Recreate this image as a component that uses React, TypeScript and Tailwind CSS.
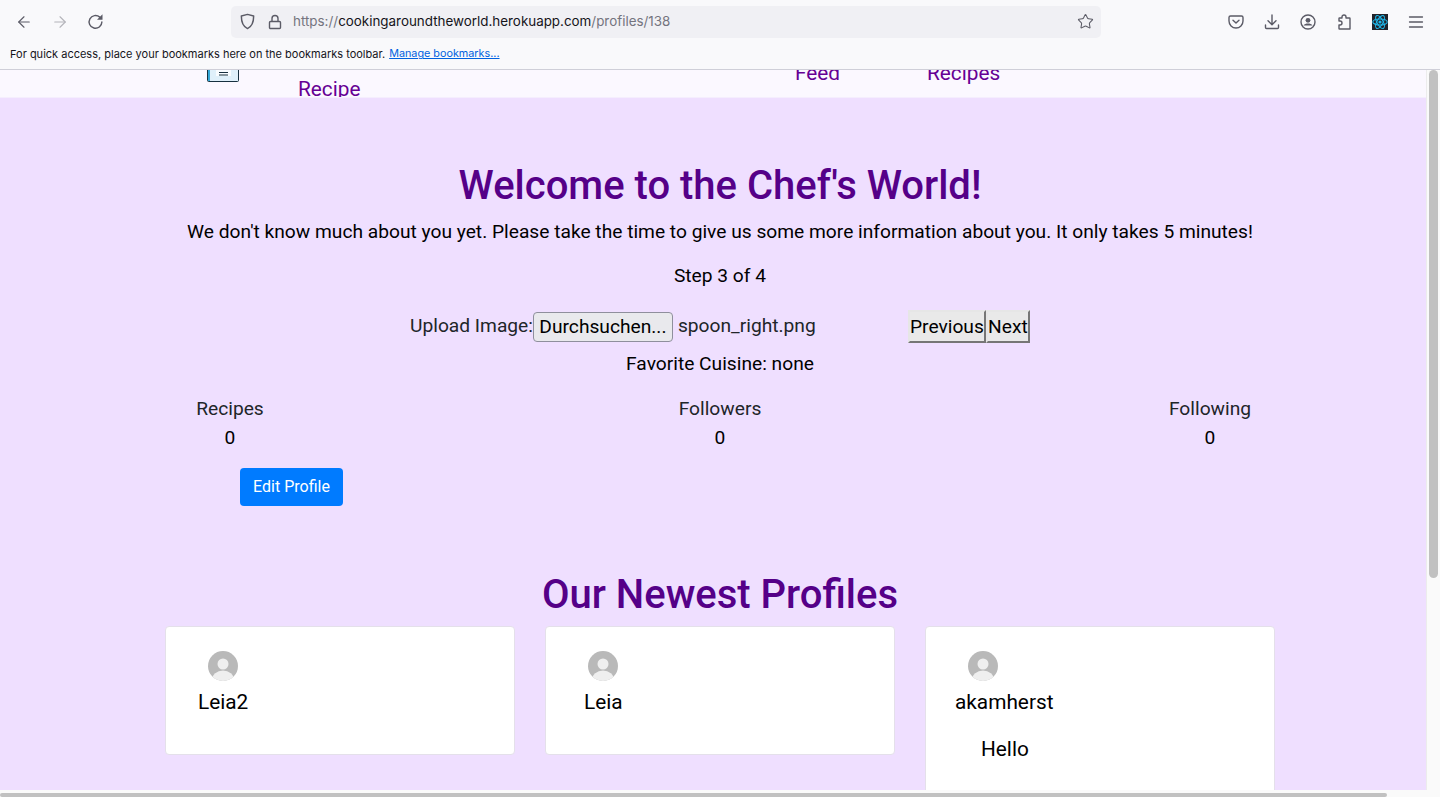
import React from 'react';
import { ArrowLeft, ArrowRight, Star } from 'lucide-react';

const Avatar = () => (
  <svg width="30" height="30" viewBox="0 0 30 30" className="block">
    <defs>
      <clipPath id="avatar-clip"><circle cx="15" cy="15" r="15" /></clipPath>
    </defs>
    <g clipPath="url(#avatar-clip)">
      <rect width="30" height="30" fill="#b9b9b9" />
      <circle cx="15" cy="13" r="5.5" fill="#efefef" />
      <ellipse cx="15" cy="29" rx="11" ry="9.5" fill="#efefef" />
    </g>
  </svg>
);

const ReactLogo = () => (
  <svg width="16" height="16" viewBox="0 0 16 16" className="block bg-[#20232a]">
    <circle cx="8" cy="8" r="1.6" fill="#1fb6e8" />
    <g fill="none" stroke="#1fb6e8" strokeWidth="1.1">
      <ellipse cx="8" cy="8" rx="7.2" ry="3" />
      <ellipse cx="8" cy="8" rx="7.2" ry="3" transform="rotate(60 8 8)" />
      <ellipse cx="8" cy="8" rx="7.2" ry="3" transform="rotate(120 8 8)" />
    </g>
  </svg>
);

// toolbar icons, all on the same 16px grid
const ToolIcon = ({ d, size = 16, width = 1.4 }: { d: string; size?: number; width?: number }) => (
  <svg width={size} height={size} viewBox="0 0 16 16" fill="none" stroke="currentColor" strokeWidth={width} strokeLinecap="round" strokeLinejoin="round" className="block shrink-0">
    <path d={d} />
  </svg>
);

const ReloadIcon = () => (
  <svg width="17" height="17" viewBox="0 0 16 16" fill="none" className="block">
    <path d="M14 8.5a6 6 0 1 1-2-4.6" stroke="currentColor" strokeWidth="1.35" strokeLinecap="round" />
    <path d="M14.6 1.2v5.2H9.4z" fill="currentColor" />
  </svg>
);

const AccountIcon = () => (
  <svg width="16" height="16" viewBox="0 0 16 16" fill="none" className="block">
    <circle cx="8" cy="8" r="7" stroke="currentColor" strokeWidth="1.4" />
    <circle cx="8" cy="6.3" r="2.4" fill="currentColor" />
    <path d="M3.6 11.2c.8-1.2 2.5-1.7 4.4-1.7s3.6.5 4.4 1.7v.4H3.6z" fill="currentColor" />
  </svg>
);

const BookIcon = () => (
  <svg width="32" height="13" viewBox="0 0 32 13" className="block">
    <rect x="0.5" y="-8" width="31" height="20.5" rx="1" fill="#dff0fa" stroke="#17303f" />
    <rect x="1" y="-8" width="2" height="20" fill="#35a7d6" />
    <rect x="9" y="-8" width="15" height="15" fill="#f8fcff" />
    <path d="M12 3.5h9M12 6h9" stroke="#17303f" strokeWidth="1" />
  </svg>
);

const profiles = [
  { name: 'Leia2', nameClass: 'pl-[32px]', bio: '', cardClass: 'h-[129px]' },
  { name: 'Leia', nameClass: 'pl-[38px]', bio: '', cardClass: 'h-[129px]' },
  { name: 'akamherst', nameClass: 'pl-[29px]', bio: 'Hello', cardClass: 'h-[190px]' },
];

const stats = [
  { label: 'Recipes', value: 0 },
  { label: 'Followers', value: 0 },
  { label: 'Following', value: 0 },
];

const App: React.FC = () => {
  return (
    <div className="flex h-[797px] w-[1440px] flex-col overflow-hidden bg-[#f9f9fb] font-['Roboto',sans-serif]">
      {/* Browser toolbar */}
      <div className="h-[70px] shrink-0 border-b border-[#cfcfd8] bg-[#f9f9fb]">
        <div className="flex h-[42px] items-center pt-[1px]">
          <div className="flex w-[231px] items-center pl-[15px] text-[#5b5b66]">
            <ArrowLeft size={18} strokeWidth={1.5} />
            <ArrowRight size={18} strokeWidth={1.5} className="ml-[18px] text-[#b4b4ba]" />
            <div className="ml-[18px]"><ReloadIcon /></div>
          </div>
          <div className="flex h-[32px] w-[870px] items-center rounded-[5px] bg-[#f0f0f4] pl-[8px] pr-[7px] text-[#5b5b66]">
            <ToolIcon size={17} d="M8 1.3l5.8 1.6c0 5.5-1 9.7-5.8 11.8C3.2 12.600 2.200 8.400 2.200 2.900z" />
            <div className="ml-[11px]">
              <ToolIcon size={16} d="M3.500 7.500h9a1 1 0 0 1 1 1v5a1 1 0 0 1-1 1h-9a1 1 0 0 1-1-1v-5a1 1 0 0 1 1-1zM5 7.500V4.500a3 3 0 0 1 6 0v3" />
            </div>
            <div className="ml-[10px] flex-1 whitespace-nowrap font-['Inter',sans-serif] text-[13.4px] text-[#74747e]">
              https://<span className="text-[#15141a]">cookingaroundtheworld.herokuapp.com</span>/profiles/138
            </div>
            <Star size={17} strokeWidth={1.5} />
          </div>
          <div className="ml-[127px] flex items-center gap-[20px] text-[#5b5b66]">
            <ToolIcon d="M2.500 2h11A1.500 1.500 0 0 1 15 3.500V7a7 7 0 0 1-14 0V3.500A1.500 1.500 0 0 1 2.500 2zM5 6.200l3 2.800 3-2.800" />
            <ToolIcon d="M8 1v9.500M4 6.800l4 4 4-4M1.500 11v2.500a1 1 0 0 0 1 1h11a1 1 0 0 0 1-1V11" />
            <AccountIcon />
            <ToolIcon d="M6 4V3a2 2 0 0 1 4 0v1h3.500a.5.5 0 0 1 .5.5V15H3.500a.5.5 0 0 1-.5-.5V11h1a2 2 0 0 0 0-4H3V4.500a.5.5 0 0 1 .5-.5z" />
            <ReactLogo />
            <ToolIcon d="M1.500 3h13M1.500 8h13M1.500 13h13" width={1.3} />
          </div>
        </div>
        <div className="flex h-[25px] items-center pl-[10px] font-['Inter',sans-serif] text-[11px] text-[#15141a]">
          For quick access, place your bookmarks here on the bookmarks toolbar.
          <span className="ml-[4px] text-[10.8px] text-[#0061e0] underline">Manage bookmarks...</span>
        </div>
      </div>

      <div className="flex h-[720px] min-h-0 shrink-0">
        <div className="flex w-[1426px] flex-col">
          {/* Site nav, scrolled so only its bottom edge shows */}
          <div className="flex h-[28px] shrink-0 items-end overflow-hidden border-b border-[#f5eefe] bg-[#fbf8ff] text-[20.8px] leading-[24px] text-[#660094]">
            <div className="mb-[15px] ml-[207px] w-[91px]"><BookIcon /></div>
            <div className="mb-[-4px] w-[497px]">Recipe</div>
            <div className="mb-[12px] w-[132px]">Feed</div>
            <div className="mb-[12px]">Recipes</div>
          </div>

          {/* Profile page */}
          <main className="flex min-h-0 flex-1 flex-col items-center overflow-hidden bg-[#efdfff] pl-[14px] pt-[64px] text-black">
            <h1 className="text-[40px] font-medium leading-[48px] text-[#550088]">Welcome to the Chef's World!</h1>
            <p className="mt-[10px] whitespace-nowrap text-[19.2px] leading-[24px]">We don't know much about you yet. Please take the time to give us some more information about you. It only takes 5 minutes!</p>
            <p className="mt-[20px] text-[19.2px] leading-[24px]">Step 3 of 4</p>

            <div className="mt-[22px] flex h-[33px] w-[620px] items-center whitespace-nowrap text-[19.2px]">
              <span className="shrink-0 text-[#212529]">Upload Image:</span>
              <button className="h-[30px] w-[140px] shrink-0 rounded-[4px] border border-[#8f8f9d] bg-[#e9e9ed] text-[19.2px] leading-none">Durchsuchen...</button>
              <span className="ml-[5px] w-[230px] shrink-0 text-[#212529]">spoon_right.png</span>
              <button className="h-[33px] w-[78px] shrink-0 border-2 border-[#767676] border-l-[#e6e6e6] border-t-[#e6e6e6] bg-[#e9e9e9] leading-none">Previous</button>
              <button className="h-[33px] w-[44px] shrink-0 border-2 border-[#767676] border-l-[#e6e6e6] border-t-[#e6e6e6] bg-[#e9e9e9] leading-none">Next</button>
            </div>

            <p className="mt-[9px] text-[19.2px] leading-[24px]">Favorite Cuisine: none</p>

            <div className="mt-[21px] flex w-[1110px] justify-between text-[19.2px]">
              {stats.map(s => (
                <div key={s.label} className="w-[130px] text-center">
                  <div className="leading-[24px] text-[#212529]">{s.label}</div>
                  <div className="mt-[5px] leading-[24px]">{s.value}</div>
                </div>
              ))}
            </div>

            <div className="mt-[18px] w-[1110px]">
              <button className="ml-[75px] h-[38px] w-[103px] rounded-[4px] bg-[#007bff] text-[16px] text-white">Edit Profile</button>
            </div>

            <h2 className="mt-[65px] text-[40px] font-medium leading-[48px] text-[#550088]">Our Newest Profiles</h2>

            <div className="mt-[7px] flex w-[1110px] items-start justify-between">
              {profiles.map(p => (
                <div key={p.name} className={`w-[350px] shrink-0 rounded-[4px] border border-[#e4e0ea] bg-white pt-[24px] ${p.cardClass}`}>
                  <div className="pl-[42px]"><Avatar /></div>
                  <div className={`mt-[9px] text-[20.8px] leading-[24px] ${p.nameClass}`}>{p.name}</div>
                  {p.bio && <div className="mt-[23px] pl-[55px] text-[20.8px] leading-[24px]">{p.bio}</div>}
                </div>
              ))}
            </div>
          </main>
        </div>

        {/* Vertical scrollbar */}
        <div className="w-[14px] shrink-0 border-l border-[#ececec] bg-[#fafafa] pl-[2px]">
          <div className="h-[508px] w-[9px] rounded-full bg-[#c1c1c1]" />
        </div>
      </div>

      {/* Horizontal scrollbar */}
      <div className="h-[7px] shrink-0 bg-[#fafafa] pt-[3px]">
        <div className="h-[4px] w-[1387px] rounded-full bg-[#c1c1c1]" />
      </div>
    </div>
  );
};

export default App;
